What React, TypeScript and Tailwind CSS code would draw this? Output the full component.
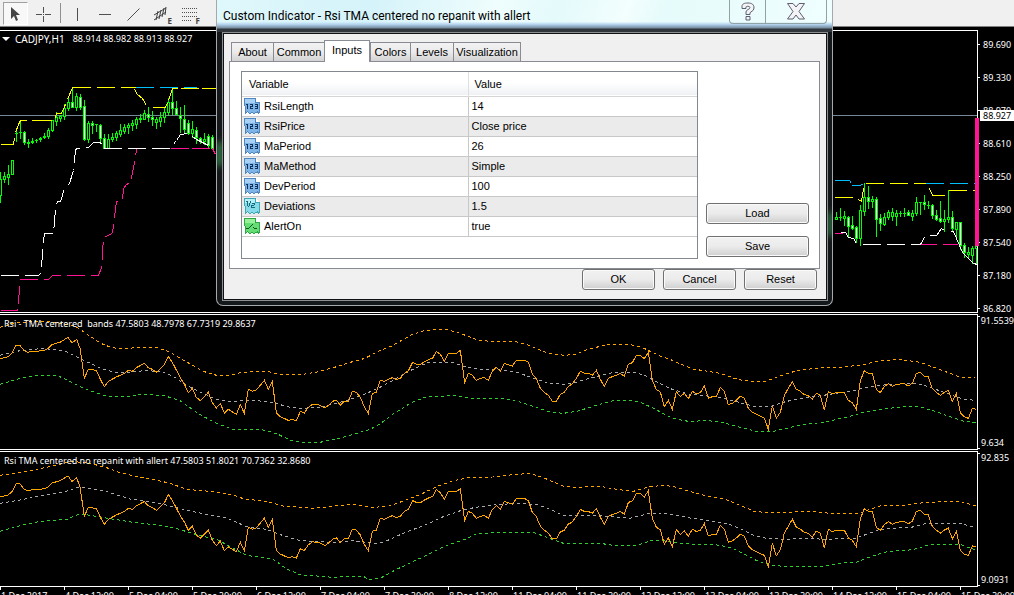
import React from "react";

type Candle = [x: number, high: number, low: number, top: number, bottom: number, falling?: 1];

const CANDLES: Candle[] = [
  [0, 172, 202, 179, 195], [4, 172, 182, 176, 179], [8, 165, 184, 174, 177], [12, 160, 174, 160, 174],
  [16, 131, 141, 133, 133], [20, 120, 138, 132, 132], [24, 131, 144, 132, 142, 1], [28, 139, 147, 142, 143],
  [32, 138, 143, 141, 142], [36, 139, 142, 140, 140], [40, 137, 141, 138, 139], [44, 133, 138, 136, 137],
  [48, 128, 138, 130, 136], [52, 120, 131, 120, 130], [56, 112, 125, 117, 121], [60, 115, 121, 116, 118],
  [64, 104, 119, 108, 116], [68, 98, 110, 102, 108], [72, 87, 107, 102, 107, 1], [76, 93, 110, 96, 107],
  [80, 94, 109, 97, 107, 1], [84, 100, 140, 106, 139, 1], [88, 121, 142, 123, 139], [92, 121, 133, 123, 125, 1],
  [96, 124, 131, 124, 124], [100, 124, 142, 125, 138, 1], [104, 134, 148, 138, 148, 1], [108, 134, 148, 139, 148],
  [112, 133, 141, 137, 139], [116, 131, 140, 133, 137], [120, 124, 136, 130, 134], [124, 124, 133, 127, 131],
  [128, 123, 133, 125, 127], [132, 120, 130, 123, 125], [136, 117, 128, 119, 124], [140, 114, 122, 118, 119],
  [144, 110, 119, 113, 119], [148, 107, 121, 114, 117, 1], [152, 111, 125, 117, 119, 1], [156, 117, 128, 119, 122],
  [160, 112, 126, 117, 121], [164, 107, 122, 112, 117], [168, 98, 115, 102, 112], [172, 89, 114, 102, 108, 1],
  [176, 101, 114, 108, 114, 1], [180, 107, 132, 115, 118, 1], [184, 105, 132, 119, 129, 1], [188, 120, 134, 123, 133, 1],
  [192, 121, 137, 129, 133], [196, 127, 143, 130, 137, 1], [200, 137, 143, 138, 141, 1], [204, 133, 144, 139, 141],
  [208, 134, 147, 136, 145, 1], [212, 135, 149, 137, 148, 1],
  [836, 212, 219, 217, 219], [840, 208, 220, 217, 217], [844, 211, 225, 216, 218], [848, 216, 237, 217, 226, 1],
  [852, 216, 229, 225, 228, 1], [856, 226, 242, 227, 238, 1], [860, 205, 245, 210, 238], [864, 183, 215, 197, 211],
  [868, 186, 208, 197, 201, 1], [872, 196, 207, 199, 201], [876, 197, 236, 199, 219, 1], [880, 214, 230, 218, 223, 1],
  [884, 213, 225, 217, 224], [888, 210, 219, 212, 217], [892, 208, 220, 212, 216], [896, 210, 225, 213, 216],
  [900, 211, 216, 213, 213], [904, 208, 216, 213, 213], [908, 210, 215, 212, 215, 1], [912, 210, 220, 213, 216],
  [916, 197, 215, 202, 213], [920, 202, 214, 202, 202], [924, 195, 209, 202, 204, 1], [928, 201, 208, 205, 205],
  [932, 204, 218, 205, 215, 1], [936, 210, 220, 215, 219, 1], [940, 201, 222, 218, 221, 1], [944, 210, 231, 219, 221],
  [948, 190, 222, 217, 219], [952, 211, 230, 217, 228, 1], [956, 222, 239, 222, 229], [960, 222, 249, 222, 245, 1],
  [964, 243, 257, 245, 252, 1], [968, 247, 258, 252, 254], [972, 246, 263, 248, 255], [976, 241, 263, 246, 248],
];

const CHANNELS: { color: string; points: string; dash?: string }[] = [
  { color: "#ffff00", points: "0,144 13,144 14,138" },
  { color: "#ffff00", points: "15,132 18,124 20,120 54,120 56,113 61,113 65,104 72,87", dash: "20 5" },
  { color: "#ffff00", points: "72,87 136,87", dash: "18 6" },
  { color: "#00bfff", points: "135,87 196,87", dash: "18 6" },
  { color: "#ffff00", points: "134,89 137,94 142,98 146,105" },
  { color: "#ffff00", points: "152,107 165,107 169,97 172,88 216,88", dash: "18 3" },
  { color: "#ffffff", points: "0,275 38,275 41,272 42,248 44,233 53,233 55,208 57,201 60,201 64,188 69,183 73,170 75,150 76,148 88,147 93,142 100,142 103,148 169,148 176,140 180,134 188,133 196,139 212,147", dash: "18 6" },
  { color: "#ff1493", points: "0,310 17,310 20,279 40,279 48,279 52,275 98,275 101,267 103,237 112,233 114,216 116,201 122,200 123,188 126,184 130,182 134,162 136,149", dash: "18 6" },
  { color: "#ff1493", points: "170,148 212,148 215,154", dash: "18 3" },
  { color: "#00bfff", points: "834,180 849,180 852,185 860,185 863,183", dash: "18 2" },
  { color: "#00bfff", points: "925,183 977,183", dash: "18 6" },
  { color: "#ffff00", points: "834,197 855,197 861,201 864,183 925,183", dash: "18 6" },
  { color: "#ffff00", points: "929,188 932,195 944,195" },
  { color: "#ffff00", points: "948,190 975,190", dash: "18 6" },
  { color: "#ff1493", points: "834,233 842,233" },
  { color: "#ffffff", points: "840,232 845,232 848,237 853,238 856,243" },
  { color: "#ffffff", points: "862,244 920,244", dash: "18 6" },
  { color: "#ffffff", points: "920,244 924,237" },
  { color: "#ffffff", points: "929,235 936,235 941,228 944,230" },
  { color: "#ffffff", points: "950,231 953,231 956,238 962,252 967,257 973,263 977,264" },
  { color: "#ff1493", points: "920,244 957,244 960,248", dash: "16 6" },
];

/* Oscillator samples: three consecutive tiles, three units to a pixel. */
const TILE_OFFSETS = [0, 990, 2010];

const RSI = [
  "0,146 24,140 36,130 48,106 60,106 72,122 84,127 96,124 108,124 132,121 144,116 156,104 168,100 180,97 204,82 216,99 230,88 240,115 253,205 265,178 289,181 301,208 313,230 325,214 349,201 373,190 385,181 397,184 409,173 433,160 445,173 457,178 469,187 481,176 493,164 505,139 517,157 529,180 541,204 553,222 565,248 577,235 589,262 601,272 625,247 637,278 649,294 661,281 673,309 685,298 709,313 721,284 733,310 745,238 757,244 769,240 793,211 805,238 817,214 829,308 841,320 865,331 877,328 889,332 901,304 913,309 925,292 937,283 955,284 975,294",
  "-3,285 10,273 20,271 31,286 43,274 55,274 67,244 79,247 91,262 103,291 115,310 127,250 139,247 151,211 163,214 187,203 199,209 211,205 223,190 235,183 248,157 260,163 272,163 284,155 296,149 308,144 319,124 331,133 343,154 355,130 379,130 391,121 397,166 404,218 415,190 427,196 439,211 451,205 463,203 475,211 487,184 499,172 511,184 523,160 547,168 559,151 584,151 595,157 607,193 619,206 631,235 643,247 655,256 667,274 679,274 691,253 703,247 715,229 727,222 739,205 751,184 763,190 775,190 787,196 799,181 811,208 823,230 835,205 847,200 859,196 871,190 883,199 895,163 907,158 919,136 931,136 943,146 955,127 961,170 967,212 979,238 991,246 1003,290 1015,271",
  "7,298 19,245 31,260 43,250 55,266 67,244 79,251 91,248 103,227 115,265 127,260 139,260 151,232 163,244 175,284 187,280 199,271 211,259 223,265 235,295 247,307 259,313 271,319 283,324 295,358 307,287 319,325 331,307 343,256 355,235 367,214 379,238 391,244 403,254 415,257 427,268 439,250 451,256 463,301 475,244 487,252 499,247 523,247 535,271 547,278 559,298 571,212 583,182 595,190 607,190 619,239 631,248 643,230 655,221 667,229 679,223 703,221 715,228 727,220 739,190 751,187 763,199 775,200 787,236 799,247 811,256 823,247 835,241 847,274 859,250 871,308 883,320 895,325 907,295 917,298",
];

const BANDS_A = {
  upper: [
    "0,52 40,40 100,34 150,35 220,46 240,58 265,75 290,92 315,106 345,114 385,115 420,112 470,113 490,119 510,126 545,148 580,167 610,184 650,196 690,196 720,188 770,184 810,186 835,193 910,193 950,186 985,177",
    "20,170 50,160 105,145 145,124 185,108 245,74 285,61 350,58 390,70 440,89 480,94 560,96 600,107 655,130 705,136 740,132 775,117 830,105 900,103 940,114 990,138",
    "10,152 40,166 70,177 150,190 205,209 245,214 290,213 330,198 380,182 460,172 520,171 580,164 630,152 690,148 750,157 800,175 870,201 915,203",
  ],
  middle: [
    "0,136 60,122 120,116 170,118 200,126 230,140 260,155 300,174 340,186 400,186 440,181 490,187 520,199 560,226 600,246 650,268 680,274 720,273 750,270 820,277 860,290 900,295 960,292",
    "30,277 60,268 110,250 150,232 200,205 240,182 290,159 330,156 365,157 410,172 450,178 510,180 560,187 610,204 650,218 700,223 740,216 790,202 850,187 920,188 950,199 1000,226",
    "7,238 60,253 150,262 200,275 250,289 300,290 350,274 400,265 480,253 550,242 600,230 650,224 740,220 780,232 850,257 880,268 917,271",
  ],
  lower: [
    "0,223 50,208 100,197 170,196 200,209 260,239 310,255 340,260 390,258 420,253 490,256 540,272 600,314 650,340 700,358 790,360 830,371 870,390 910,398 960,397",
    "30,384 70,373 120,358 150,342 190,312 240,280 290,260 380,257 420,265 520,266 570,276 620,293 660,306 700,310 740,304 800,286 850,272 890,270 930,276 970,295",
    "7,325 60,335 110,331 160,338 210,352 260,364 310,364 350,355 390,345 460,337 500,328 540,319 580,307 630,298 700,290 750,291 790,302 850,324 880,333 917,339",
  ],
};

const BANDS_B = {
  upper: [
    "0,496 60,487 130,474 180,463 215,454 270,460 320,473 360,488 410,500 460,508 510,520 560,538 640,545 700,555 730,566 800,575 850,588 940,595 990,590",
    "30,586 70,583 130,592 175,589 220,573 270,554 320,530 370,512 420,502 490,501 550,494 600,490 640,503 700,528 740,532 810,529 860,538 910,544 960,530 1000,526",
    "7,529 60,544 110,558 160,566 210,586 250,603 290,608 370,606 430,605 480,610 570,610 600,598 640,585 700,586 770,577 870,574 917,588",
  ],
  middle: [
    "0,580 60,570 120,558 190,547 240,530 320,545 390,567 480,580 540,596 600,609 680,624 740,650 800,658 850,677 900,692 1000,697",
    "30,696 70,692 130,700 160,697 220,670 290,643 340,620 400,599 450,590 500,584 560,580 620,583 660,598 700,616 800,616 900,625 950,612 990,609",
    "7,614 60,624 120,633 170,640 210,656 250,676 290,685 350,688 400,685 470,688 560,684 610,665 650,655 720,653 770,640 870,640 917,653",
  ],
  lower: [
    "0,664 60,647 120,634 200,628 240,611 330,626 400,637 470,645 530,656 600,677 650,688 700,715 740,736 820,748 860,777 900,794 1000,802",
    "30,800 100,799 115,808 150,805 200,778 270,745 340,710 400,690 440,671 520,667 610,667 650,682 700,700 810,700 850,706 920,706 960,693 1000,691",
    "7,697 60,702 130,703 180,712 220,730 260,752 300,765 340,769 460,768 510,760 560,756 600,741 650,725 730,719 780,703 870,703 917,720",
  ],
};

function joinTiles(tiles: string[], mapY: (y: number) => number = (y) => y) {
  return tiles
    .flatMap((tile, i) =>
      tile.split(" ").map((pair) => {
        const [x, y] = pair.split(",").map(Number);
        return `${x + TILE_OFFSETS[i]},${mapY(y)}`;
      }),
    )
    .join(" ");
}

function Oscillator({ top, rsi, bands }: { top: number; rsi: string; bands: typeof BANDS_A }) {
  const lines: [string, string, string | undefined][] = [
    [joinTiles(bands.upper), "#ffa500", "3 3"],
    [joinTiles(bands.middle), "#a9a9a9", "3 3"],
    [joinTiles(bands.lower), "#32cd32", "3 3"],
    [rsi, "#ffa500", undefined],
  ];
  return (
    <svg
      className="block h-[134px] w-full"
      viewBox={`0 ${top} 2931 402`}
      preserveAspectRatio="none"
      fill="none"
      shapeRendering="crispEdges"
      aria-hidden="true"
    >
      {lines.map(([points, color, dash], i) => (
        <polyline key={i} points={points} stroke={color} strokeDasharray={dash} vectorEffect="non-scaling-stroke" />
      ))}
    </svg>
  );
}

function PriceChart() {
  return (
    <svg
      className="block h-[281px] w-full"
      viewBox="0 31 977 281"
      preserveAspectRatio="none"
      fill="none"
      shapeRendering="crispEdges"
      aria-hidden="true"
    >
      <path d="M0 115.5H977" stroke="#778899" />
      {CANDLES.map(([x, high, low, top, bottom, falling]) => (
        <g key={x} stroke="#00ff00">
          <path d={`M${x + 0.5} ${high}V${low + 1}`} />
          {bottom - top < 1 ? (
            <path d={`M${x - 1} ${top + 0.5}H${x + 2}`} />
          ) : (
            <rect
              x={x - 0.5}
              y={top + 0.5}
              width={2}
              height={bottom - top}
              fill={falling ? "#ffffff" : "#000000"}
            />
          )}
        </g>
      ))}
      <g transform="translate(0.5 0.5)">
        {CHANNELS.map((c, i) => (
          <polyline key={i} points={c.points} stroke={c.color} strokeDasharray={c.dash} />
        ))}
      </g>
    </svg>
  );
}

const PRICES = ["89.690", "89.330", "88.970", "88.610", "88.250", "87.890", "87.540", "87.180", "86.820"];

const DATES = [
  "1 Dec 2017", "4 Dec 12:00", "5 Dec 04:00", "5 Dec 20:00", "6 Dec 12:00", "7 Dec 04:00", "7 Dec 20:00", "8 Dec 12:00",
  "11 Dec 04:00", "11 Dec 20:00", "12 Dec 12:00", "13 Dec 04:00", "13 Dec 20:00", "14 Dec 12:00", "15 Dec 04:00", "15 Dec 20:00",
];

function SubWindow(props: { title: string; max: string; min: string; children: React.ReactNode }) {
  return (
    <section className="mt-px flex">
      <div className="relative min-w-0 flex-1 border border-l-0 border-white">
        {props.children}
        <h2 className="absolute top-[3px] left-1 leading-3 whitespace-pre">{props.title}</h2>
      </div>
      <div className="flex w-9 flex-col justify-between whitespace-nowrap">
        <span className="flex items-start gap-px pt-px">
          <i className="mt-px h-px w-[2px] bg-white" />
          <span className="leading-3">{props.max}</span>
        </span>
        <span className="flex items-end gap-px pb-px">
          <i className="h-px w-[2px] bg-white" />
          <span className="leading-3">{props.min}</span>
        </span>
      </div>
    </section>
  );
}

function Toolbar() {
  const tool = "mt-[2px] flex h-6 w-7 items-center justify-center";
  return (
    <header className="flex h-[27px] items-start border-b border-[#808080] bg-[#f0f0f0] pl-[3px]">
      <button aria-label="Cursor" className="mt-[2px] flex h-[23px] w-[25px] items-center justify-center border border-t-[#a0a0a0] border-r-white border-b-white border-l-[#a0a0a0] bg-[#f8f8f8]">
        <svg width="11" height="16" viewBox="0 0 11 16"><path d="M1 1v12l3-3 2 5 2-1-2-5h4z" fill="#454545" /></svg>
      </button>
      <button aria-label="Crosshair" className={tool + " ml-px"}>
        <svg width="15" height="15" viewBox="0 0 15 15" stroke="#505050" shapeRendering="crispEdges"><path d="M7.5 0v6M7.5 9v6M0 7.5h6M9 7.5h6M7 7.5h1" /></svg>
      </button>
      <i className="mt-[3px] ml-[3px] h-5 w-px bg-[#909090]" />
      <button aria-label="Vertical line" className={tool + " ml-[2px]"}>
        <svg width="13" height="13" viewBox="0 0 13 13" stroke="#505050" shapeRendering="crispEdges"><path d="M6.5 0v13" /></svg>
      </button>
      <button aria-label="Horizontal line" className={tool}>
        <svg width="13" height="13" viewBox="0 0 13 13" stroke="#505050" shapeRendering="crispEdges"><path d="M0 6.5h12" /></svg>
      </button>
      <button aria-label="Trendline" className={tool}>
        <svg width="13" height="13" viewBox="0 0 13 13" stroke="#505050"><path d="M.5 12.500l12-12" /></svg>
      </button>
      <button aria-label="Equidistant channel" className={tool + " relative"}>
        <svg width="16" height="16" viewBox="0 0 16 16" stroke="#404040" fill="none"><path d="M1 9L13 2M1 14L13 6M3 14L5 5M6 13l2-9M9 11l2-9M12 9l1-8" /></svg>
        <span className="absolute right-[3px] bottom-[2px] bg-[#f0f0f0] text-[8px] leading-[6px] font-bold text-[#404040]">E</span>
      </button>
      <button aria-label="Fibonacci retracement" className={tool + " relative"}>
        <svg width="15" height="15" viewBox="0 0 15 15" stroke="#505050" strokeDasharray="1 1" shapeRendering="crispEdges"><path d="M0 1.500h15M0 5.500h15M0 9.500h15M0 13.500h9" /></svg>
        <span className="absolute right-[3px] bottom-[2px] bg-[#f0f0f0] text-[8px] leading-[6px] font-bold text-[#404040]">F</span>
      </button>
    </header>
  );
}

type Kind = "int" | "double" | "bool";

const ROWS: [Kind, string, string][] = [
  ["int", "RsiLength", "14"],
  ["int", "RsiPrice", "Close price"],
  ["int", "MaPeriod", "26"],
  ["int", "MaMethod", "Simple"],
  ["int", "DevPeriod", "100"],
  ["double", "Deviations", "1.5"],
  ["bool", "AlertOn", "true"],
];

function TypeIcon({ kind }: { kind: Kind }) {
  const [light, fill, edge, ink] = {
    int: ["#a9d0f5", "#7fb4e6", "#4f86bd", "#10305c"],
    double: ["#b5eef5", "#86dbe8", "#3fa5b5", "#14697a"],
    bool: ["#98f098", "#66dd74", "#2fa545", "#0c5a20"],
  }[kind];
  return (
    <svg width="16" height="16" viewBox="0 0 16 16" fill="none" shapeRendering="crispEdges" aria-hidden="true">
      <path d="M.5.5h11l4 4v10l-1 1-1-2-1 1h-1l-1 1h-1l-1-1h-1l-1 1h-1l-1-1-1-1-1 1-1 1z" fill={fill} stroke={edge} />
      <path d="M1 1h10v4H1z" fill={light} />
      <path d="M11.5.5v4h4" fill="#ffffff" stroke={edge} />
      {kind === "int" && (
        <path d="M2 6.500h2M3.500 6v5M6 6.500h3M8.500 6v2M6 8.500h3M6.500 8v3M6 10.500h3M11 6.500h3M13.500 6v5M11 8.500h3M11 10.500h3" stroke={ink} />
      )}
      {kind === "double" && (
        <path d="M2 3.500h2M3.500 3v5M6.500 3v2M5.500 5v3M4.500 8v1M8 5.500h2M10.500 5v2M8 7.500h2M7.500 7v3M8 9.500h3" stroke={ink} />
      )}
      {kind === "bool" && <path d="M2 10.500h3M5 9.500h1M6 8.500h1M7 7.500h1M8 6.500h1M9 9.500h1M10 10.500h3" stroke={ink} />}
    </svg>
  );
}

const BUTTON =
  "h-[21px] rounded-[3px] border border-[#707070] bg-linear-to-b from-[#f2f2f2] from-0% via-[#ebebeb] via-50% to-[#cfcfcf] inset-ring inset-ring-[#fafafa] leading-none";

function Dialog() {
  const tabs = [
    { name: "About", width: "w-[43px]" },
    { name: "Common", width: "w-[52px]" },
    { name: "Inputs", width: "w-[46px]" },
    { name: "Colors", width: "w-[41px]" },
    { name: "Levels", width: "w-[44px]" },
    { name: "Visualization", width: "w-[68px]" },
  ];
  return (
    <div
      role="dialog"
      aria-labelledby="dialog-title"
      className="absolute top-0 left-[216px] w-[617px] overflow-hidden rounded-b-[7px] border border-t-0 border-[#a5a9ab] bg-[#15181a] pr-[4px] pb-[4px] pl-[5px] font-['Liberation_Sans',sans-serif] text-[11px] text-black"
    >
      <div className="absolute top-[142px] left-0 h-6 w-[5px] bg-[#3a9a58] blur-[3px]" />
      <div className="absolute top-[212px] right-0 h-6 w-[4px] bg-[#3a9a58] blur-[3px]" />
      <div className="relative -mr-[4px] -ml-[5px] flex h-[32px] items-start justify-between bg-[linear-gradient(180deg,transparent_68%,#b5d4f0_76%,#7d94a8_86%,#30363c_92%),linear-gradient(110deg,#dff8fb_0%,#d5f3fa_25%,#effdfd_45%,#e4fafb_55%,#f3fefe_66%,#e6fbfb_72%,#f0fefe_100%)] pl-[6px]">
        <h1 id="dialog-title" className="pt-[8px] font-[Roboto,sans-serif] text-[12px] leading-4">
          Custom Indicator - Rsi TMA centered no repanit with allert
        </h1>
        <div className="mr-[5px] flex h-6 rounded-b-[4px] border border-t-0 border-[#8fa3a5]">
          <button aria-label="Help" className="flex w-9 items-center justify-center border-r border-[#8fa3a5]">
            <svg width="14" height="19" viewBox="0 0 14 19" fill="none"><path d="M1 4.500C1 2 3 1 7 1s6 1.500 6 5-4 3.500-4 5v1.500H5V10c0-2.500 4-2.500 4-4.500C9 4 5 4 5 5v1.500H1zM5 14.500h4v3.500H5z" fill="#f4f4f6" stroke="#5d5e70" /></svg>
          </button>
          <button aria-label="Close" className="flex w-[60px] items-center justify-center">
            <svg width="18" height="17" viewBox="0 0 18 17" fill="none"><path d="M.5.500h5.500L9 4l3-3.500h5.500L12 8.500l5.500 7.500H12l-3-4-3 4H.5L6 8.500z" fill="#f4f4f6" stroke="#5d5e70" /></svg>
          </button>
        </div>
      </div>
      <div className="relative border border-[#8d9092] bg-[#f0f0f0] px-[6px] pt-[7px] pb-[10px] inset-ring inset-ring-[#111111]">
        <div role="tablist" className="flex items-end px-[2px]">
          {tabs.map((tab) =>
            tab.name === "Inputs" ? (
              <button key={tab.name} role="tab" aria-selected="true" className={tab.width + " relative -mb-px h-[22px] border border-b-0 border-[#898c95] bg-white pb-[2px]"}>
                {tab.name}
              </button>
            ) : (
              <button key={tab.name} role="tab" aria-selected="false" className={tab.width + " -mr-px h-[19px] border border-b-0 border-[#898c95] bg-linear-to-b from-[#f2f2f2] from-0% via-[#ebebeb] via-50% to-[#d2d2d2]"}>
                {tab.name}
              </button>
            ),
          )}
        </div>
        <div className="mr-px flex border border-[#898c95] bg-white pt-[9px] pr-[10px] pb-[9px] pl-[11px]">
          <div className="h-[188px] min-w-0 flex-1 border border-[#828790]">
            <table className="w-full table-fixed border-collapse text-left">
              <thead>
                <tr className="h-6 border-b border-[#d5d5d5] bg-linear-to-b from-white from-45% to-[#eff1f4]">
                  <th className="w-[226px] border-r border-[#dedfe1] pl-[7px] font-normal">Variable</th>
                  <th className="pl-[6px] font-normal">Value</th>
                </tr>
              </thead>
              <tbody>
                {ROWS.map(([kind, name, value]) => (
                  <tr key={name} className="h-5 border-b border-[#c8c8c8] leading-none even:bg-[#ebebeb]">
                    <td className="border-r border-[#c8c8c8] p-0 pl-[2px]">
                      <span className="flex items-center gap-1">
                        <TypeIcon kind={kind} />
                        {name}
                      </span>
                    </td>
                    <td className="p-0 pl-[3px]">{value}</td>
                  </tr>
                ))}
              </tbody>
            </table>
          </div>
          <div className="ml-2 flex w-[103px] flex-col justify-end gap-3 pb-[2px]">
            <button className={BUTTON}>Load</button>
            <button className={BUTTON}>Save</button>
          </div>
        </div>
        <div className="mr-[4px] flex justify-end gap-2">
          <button className={BUTTON + " w-[73px]"}>OK</button>
          <button className={BUTTON + " w-[73px]"}>Cancel</button>
          <button className={BUTTON + " w-[73px]"}>Reset</button>
        </div>
      </div>
    </div>
  );
}

export default function App() {
  return (
    <div className="relative min-h-screen overflow-hidden bg-black font-['Noto_Sans',sans-serif] text-[9px] text-white">
      <Toolbar />
      <main className="pt-px">
        <section className="flex">
          <div className="relative mt-[2px] min-w-0 flex-1 border border-l-0 border-white">
            <PriceChart />
            <h2 className="absolute top-[2px] left-[2px] flex items-center gap-[5px] leading-3 whitespace-pre">
              <svg width="8" height="5" viewBox="0 0 8 5" fill="#ffffff" aria-hidden="true"><path d="M0 0h8L4 4z" /></svg>
              <span className="text-[10px]">CADJPY,H1</span>
              <span className="pl-[3px]">88.914 88.982 88.913 88.927</span>
            </h2>
          </div>
          <div className="relative h-[285px] w-9 overflow-y-clip">
            {PRICES.map((p) => (
              <div key={p} className="flex h-[33px] items-center gap-[3px]">
                <i className="h-px w-[2px] bg-white" />
                {p}
              </div>
            ))}
            <div className="absolute top-[82px] right-0 left-[2px] bg-white pl-[3px] leading-[11px] text-black">88.927</div>
            <div className="absolute top-[90px] -left-[3px] h-[128px] w-1 bg-[#ff1493]" />
          </div>
        </section>
        <SubWindow title="Rsi - TMA centered  bands 47.5803 48.7978 67.7319 29.8637" max="91.5539" min="9.634">
          <Oscillator top={15} rsi={joinTiles(RSI)} bands={BANDS_A} />
        </SubWindow>
        <SubWindow title="Rsi TMA centered no repanit with allert 47.5803 51.8021 70.7362 32.8680" max="92.835" min="9.0931">
          <Oscillator top={426} rsi={joinTiles(RSI, (y) => y * 0.985 + 417)} bands={BANDS_B} />
        </SubWindow>
        <div className="flex h-2 overflow-hidden">
          {DATES.map((d) => (
            <div key={d} className="flex w-16 shrink-0 items-start whitespace-nowrap">
              <i className="h-[3px] w-px shrink-0 bg-white" />
              <span className="pt-[3px] leading-3">{d}</span>
            </div>
          ))}
        </div>
      </main>
      <Dialog />
    </div>
  );
}
